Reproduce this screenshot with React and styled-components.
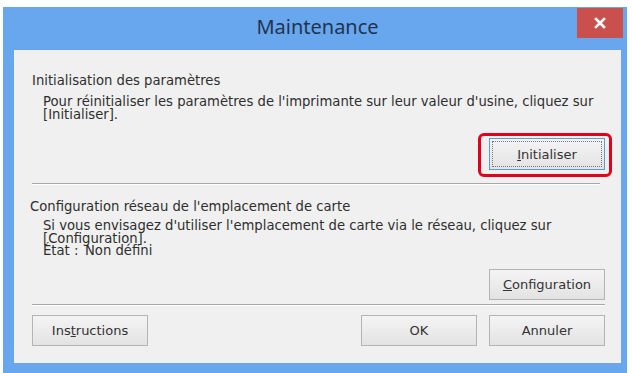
import React from "react";
import styled, { createGlobalStyle } from "styled-components";

const Global = createGlobalStyle`
  html, body { margin: 0; padding: 0; background: #ffffff; }
  body { width: 632px; height: 373px; overflow: hidden; }
`;

const Page = styled.div`
  padding: 7px 5px 0 3px;
  height: 373px;
  box-sizing: border-box;
`;

const Window = styled.div`
  width: 624px;
  height: 366px;
  background: #68a7ee;
  display: flex;
  flex-direction: column;
  box-sizing: border-box;
  padding: 0 6px 10px 11px;
`;

const TitleBar = styled.div`
  height: 43px;
  position: relative;
  display: flex;
  align-items: center;
  justify-content: center;
`;

const Title = styled.div`
  font-family: "Noto Sans", "Open Sans", sans-serif;
  font-size: 20px;
  color: #22344e;
  margin-top: -4px;
`;

const CloseButton = styled.div`
  position: absolute;
  right: -2px;
  top: 1px;
  width: 46px;
  height: 30px;
  background: #c9504c;
  display: flex;
  align-items: center;
  justify-content: center;
`;

const Client = styled.div`
  flex: 1;
  background: #f0f0f0;
  display: flex;
  flex-direction: column;
  padding: 0 16px 0 18px;
  font-family: "DejaVu Sans", Verdana, sans-serif;
  font-size: 13.2px;
  color: #2e2e2e;
`;

const Heading = styled.div`
  line-height: 15px;
  margin-left: ${(p) => p.$indent || 0}px;
  margin-top: ${(p) => p.$top}px;
`;

const Desc = styled.div`
  line-height: ${(p) => p.$lh}px;
  margin-left: 11px;
  margin-top: ${(p) => p.$top}px;
`;

const Label = styled.span`
  display: inline-block;
  width: 42px;
`;

const ButtonRow = styled.div`
  display: flex;
  justify-content: flex-end;
  align-items: center;
  gap: 12px;
  margin-top: ${(p) => p.$top}px;
  margin-right: ${(p) => p.$right || 0}px;
`;

const Spacer = styled.div`
  flex: 1;
`;

const Button = styled.div`
  width: 116px;
  height: ${(p) => (p.$default ? 32 : 31)}px;
  box-sizing: border-box;
  border: 1px solid ${(p) => (p.$default ? "#5f9bd0" : "#b4b4b4")};
  background: linear-gradient(#f4f4f4, #e3e3e3);
  display: flex;
  align-items: center;
  justify-content: center;
  font-family: "DejaVu Sans", Verdana, sans-serif;
  font-size: 13px;
  color: #333;
  position: relative;
  &::after {
    content: "";
    display: ${(p) => (p.$default ? "block" : "none")};
    position: absolute;
    inset: 2px;
    border: 1px dotted #777;
  }
`;

const Highlight = styled.div`
  border: 3px solid #e3001b;
  border-radius: 6px;
  padding: 2px 4px 4px 8px;
`;

const Separator = styled.div`
  height: 1px;
  background: #a7a7a7;
  box-shadow: 0 1px 0 #ffffff;
  margin-top: ${(p) => p.$top}px;
  margin-right: ${(p) => p.$right}px;
`;

const U = styled.span`
  text-decoration: underline;
`;

export default function App() {
  return (
    <>
      <Global />
      <Page>
        <Window>
          <TitleBar>
            <Title>Maintenance</Title>
            <CloseButton>
              <svg width="12" height="12" viewBox="0 0 12 12">
                <path d="M2 2 L10 10 M10 2 L2 10" stroke="#fff" strokeWidth="2.6" strokeLinecap="square" />
              </svg>
            </CloseButton>
          </TitleBar>
          <Client>
            <Heading $top={23}>Initialisation des paramètres</Heading>
            <Desc $lh={13} $top={7}>
              Pour réinitialiser les paramètres de l'imprimante sur leur valeur d'usine, cliquez sur
              <br />
              [Initialiser].
            </Desc>
            <ButtonRow $top={12} $right={-7}>
              <Highlight>
                <Button $default>
                  <span>
                    <U>I</U>nitialiser
                  </span>
                </Button>
              </Highlight>
            </ButtonRow>
            <Separator $top={6} $right={5} />
            <Heading $indent={-2} $top={15}>
              Configuration réseau de l'emplacement de carte
            </Heading>
            <Desc $lh={12.5} $top={6}>
              Si vous envisagez d'utiliser l'emplacement de carte via le réseau, cliquez sur
              <br />
              [Configuration].
              <br />
              <Label>État :</Label>Non défini
            </Desc>
            <ButtonRow $top={11}>
              <Button>
                <span>
                  <U>C</U>onfiguration
                </span>
              </Button>
            </ButtonRow>
            <Separator $top={4} $right={0} />
            <ButtonRow $top={10}>
              <Button>
                <span>
                  Ins<U>t</U>ructions
                </span>
              </Button>
              <Spacer />
              <Button>OK</Button>
              <Button>Annuler</Button>
            </ButtonRow>
          </Client>
        </Window>
      </Page>
    </>
  );
}
